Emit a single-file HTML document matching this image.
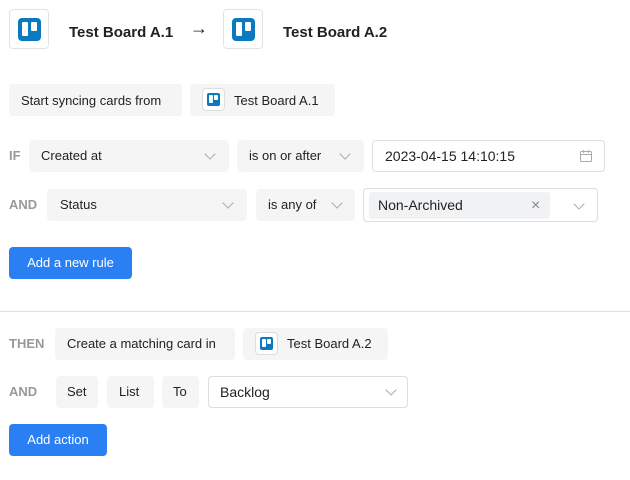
<!DOCTYPE html>
<html><head><style>
body{margin:0;width:630px;height:480px;background:#fff;font-family:"Liberation Sans",sans-serif;font-size:13px;color:#222;position:relative;overflow:hidden}
.a{position:absolute;box-sizing:border-box}
.chip{background:#f5f5f5;border-radius:4px;height:32px;line-height:32px;padding-left:12px}
.lbl{color:#999;height:32px;line-height:32px;font-weight:bold}
.box{border:1px solid #ddd;border-radius:4px;background:#fff}
.btn{background:#2a7ff3;color:#fff;border-radius:4px;height:32px;line-height:32px;text-align:center}
.chev{position:absolute;top:12px;width:7px;height:7px;border-right:1.2px solid #aaa;border-bottom:1.2px solid #aaa;transform:rotate(45deg)}
.logo{position:absolute;background:#0b79bf;border-radius:4px}
.logo:before,.logo:after{content:"";position:absolute;background:#fff;border-radius:1px}
.lg:before{left:17%;top:17%;width:27%;height:62%}
.lg:after{left:56%;top:17%;width:27%;height:40%}
</style></head><body>
<div class="a box" style="left:9px;top:9px;width:40px;height:40px;border-color:#e3e3e3"><div class="logo lg" style="left:8px;top:8px;width:23px;height:23px"></div></div>
<div class="a" style="left:69px;top:24px;font-weight:bold;font-size:15px">Test Board A.1</div>
<div class="a" style="left:190px;top:18px;font-size:18px;font-weight:bold">→</div>
<div class="a box" style="left:223px;top:9px;width:40px;height:40px;border-color:#e3e3e3"><div class="logo lg" style="left:8px;top:8px;width:23px;height:23px"></div></div>
<div class="a" style="left:283px;top:24px;font-weight:bold;font-size:15px">Test Board A.2</div>

<div class="a chip" style="left:9px;top:84px;width:173px;line-height:33px">Start syncing cards from</div>
<div class="a chip" style="left:190px;top:84px;width:145px;padding-left:44px;line-height:33px">Test Board A.1
<div class="a box" style="left:12px;top:4px;width:23px;height:23px;border-color:#ddd"><div class="logo lg" style="left:4px;top:4px;width:13px;height:13px;border-radius:2px"></div></div></div>

<div class="a lbl" style="left:9px;top:140px">IF</div>
<div class="a chip" style="left:29px;top:140px;width:200px">Created at<div class="chev" style="left:177px;top:10px"></div></div>
<div class="a chip" style="left:237px;top:140px;width:127px">is on or after<div class="chev" style="left:104px;top:10px"></div></div>
<div class="a box" style="left:372px;top:140px;width:233px;height:32px;line-height:30px;padding-left:12px;font-size:14px">2023-04-15 14:10:15
<svg class="a" style="left:206px;top:8px" width="14" height="14" viewBox="0 0 14 14" fill="none" stroke="#aaa" stroke-width="1"><rect x="1.5" y="2.5" width="11" height="10" rx="1"/><path d="M1.5 5.5h11M4.5 1v3M9.5 1v3"/></svg></div>

<div class="a lbl" style="left:9px;top:189px">AND</div>
<div class="a chip" style="left:47px;top:189px;width:200px;padding-left:13px">Status<div class="chev" style="left:177px;top:10px"></div></div>
<div class="a chip" style="left:256px;top:189px;width:99px">is any of<div class="chev" style="left:77px;top:10px"></div></div>
<div class="a box" style="left:363px;top:188px;width:235px;height:34px">
<div class="a" style="left:5px;top:3px;width:181px;height:27px;line-height:27px;background:#f1f2f4;border-radius:3px;padding-left:9px;font-size:14px">Non-Archived<span class="a" style="left:162px;top:0;color:#888;font-size:16px">×</span></div>
<div class="chev" style="left:211px;top:11px"></div></div>

<div class="a btn" style="left:9px;top:247px;width:123px">Add a new rule</div>
<div class="a" style="left:0;top:311px;width:630px;height:1px;background:#e0e0e0"></div>

<div class="a lbl" style="left:9px;top:328px">THEN</div>
<div class="a chip" style="left:55px;top:328px;width:180px">Create a matching card in</div>
<div class="a chip" style="left:243px;top:328px;width:145px;padding-left:44px">Test Board A.2
<div class="a box" style="left:12px;top:4px;width:23px;height:23px;border-color:#ddd"><div class="logo lg" style="left:4px;top:4px;width:13px;height:13px;border-radius:2px"></div></div></div>

<div class="a lbl" style="left:9px;top:376px">AND</div>
<div class="a chip" style="left:56px;top:376px;width:42px;padding-left:11px">Set</div>
<div class="a chip" style="left:107px;top:376px;width:47px;padding-left:12px">List</div>
<div class="a chip" style="left:162px;top:376px;width:37px;padding-left:11px">To</div>
<div class="a box" style="left:208px;top:376px;width:200px;height:32px;line-height:30px;padding-left:11px;font-size:14px">Backlog<div class="chev" style="left:178px;top:9px"></div></div>

<div class="a btn" style="left:9px;top:424px;width:98px">Add action</div>
</body></html>
